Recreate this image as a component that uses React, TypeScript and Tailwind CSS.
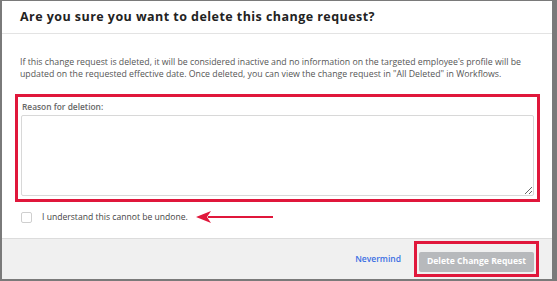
export default function App() {
  return (
    <div className="w-[557px] h-[281px] bg-[#7a7a7a] pl-[2px] pt-[1px] pr-[5px] pb-[2px] overflow-hidden" style={{ fontFamily: '"Open Sans", Lato, sans-serif' }}>
      <div className="w-full h-full bg-white flex flex-col">
        {/* Header */}
        <div className="h-[33px] border-b border-[#e3e3e3] flex items-center px-[18px]">
          <h2 className="text-[12.5px] font-bold text-[#222] tracking-[0.45px]">Are you sure you want to delete this change request?</h2>
        </div>

        {/* Body */}
        <div className="flex-1 px-[13px] pt-[22px]">
          <p className="px-[5px] text-[8.75px] leading-[12px] text-[#555]">
            If this change request is deleted, it will be considered inactive and no information on the targeted employee's profile will be updated on the requested effective date. Once deleted, you can view the change request in "All Deleted" in Workflows.
          </p>

          <div className="mt-[14px] w-[525px] h-[108px] border-[3px] border-[#e0173b] px-[3px] pt-[4px] pb-[3px] flex flex-col">
            <label className="text-[8.4px] font-semibold text-[#666] px-[1px] leading-[12px]">Reason for deletion:</label>
            <textarea className="mt-[2px] flex-1 w-full border border-[#d8d8d8] rounded-[2px] resize-y outline-none" />
          </div>

          <div className="flex items-center mt-[8px] pl-[6px] h-[14px]">
            <span className="w-[11px] h-[11px] border border-[#cfcfcf] rounded-[2px] bg-white" />
            <span className="ml-[10px] text-[8.6px] text-[#444]">I understand this cannot be undone.</span>
            <svg width="80" height="12" viewBox="0 0 80 12" className="ml-[8px]">
              <line x1="12" y1="6" x2="77" y2="6" stroke="#e0173b" strokeWidth="2" />
              <polygon points="0,6 15,0 11,6 15,12" fill="#e0173b" />
            </svg>
          </div>
        </div>

        {/* Footer */}
        <div className="h-[41px] bg-[#f0f0f0] border-t border-[#dcdcdc] flex items-center justify-end pr-[13px]">
          <button className="text-[8.5px] font-semibold text-[#3b6fe3] mr-[13px]">Nevermind</button>
          <div className="border-[3px] border-[#e0173b] p-[2px]">
            <button className="w-[115px] h-[20px] bg-[#b7b9bc] rounded-[2px] text-[8.6px] font-bold text-white">Delete Change Request</button>
          </div>
        </div>
      </div>
    </div>
  )
}
